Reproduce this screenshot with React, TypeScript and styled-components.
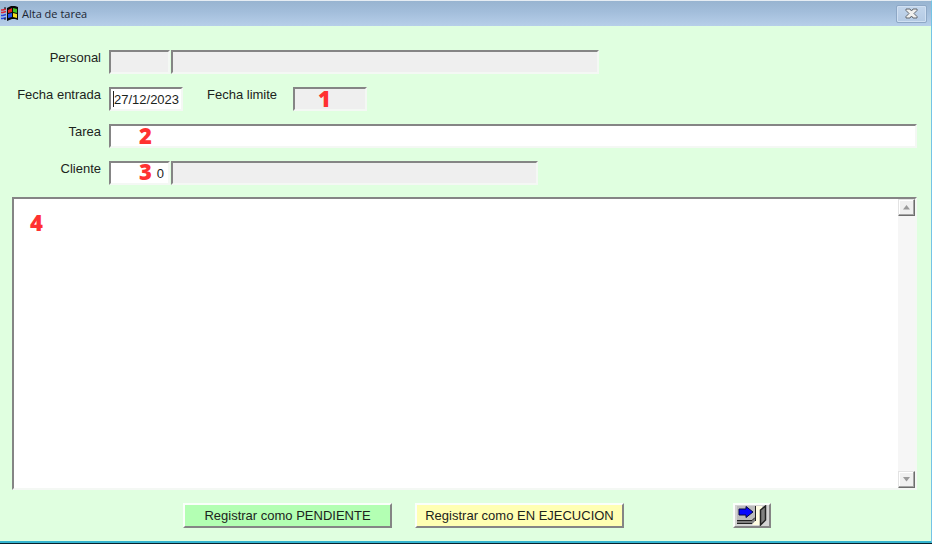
import React from "react";
import styled, { createGlobalStyle } from "styled-components";

const GlobalStyle = createGlobalStyle`
  * { box-sizing: border-box; }
  body { margin: 0; background: #06222c; }
  button, input, textarea { font: inherit; color: inherit; margin: 0; }
`;

const Window = styled.main`
  display: flex;
  flex-direction: column;
  height: calc(100vh - 1px);
  background: #e0ffe0;
  border-top: 1px solid #e6edf3;
  border-right: 1px solid #74c3e6;
  border-bottom: 2px solid #35b4cf;
  font-family: "Liberation Sans", Arial, sans-serif;
  font-size: 13px;
  line-height: 16px;
  color: #1c241c;
`;

const TitleBar = styled.header`
  display: flex;
  align-items: center;
  gap: 4px;
  height: 25px;
  flex: none;
  padding: 0 4px 0 1px;
  background: linear-gradient(#98b4d0, #a3bedb 45%, #b7cfe9);
`;

const Title = styled.h1`
  flex: 1;
  margin: 0;
  font: 400 11px/16px "Open Sans", "Noto Sans", sans-serif;
  color: #1c2733;
`;

const CloseButton = styled.button`
  display: flex;
  align-items: center;
  justify-content: center;
  width: 31px;
  height: 18px;
  padding: 0;
  border: 1px solid #8ea8c6;
  border-radius: 2px;
  background: linear-gradient(#c3d6ec, #b4cae4);
  box-shadow: inset 0 0 0 1px #d0e0f2;
`;

const Form = styled.form`
  display: flex;
  flex-direction: column;
  flex: 1;
  min-height: 0;
  padding: 24px 14px 13px 12px;
`;

const Fields = styled.div`
  display: flex;
  flex-direction: column;
  gap: 13px;
  margin-bottom: 12px;
`;

const Row = styled.div`
  display: flex;
  align-items: flex-start;
  gap: 1px;
`;

const Label = styled.label`
  width: 89px;
  margin-right: 7px;
  text-align: right;
`;

const InlineLabel = styled.label`
  width: 85px;
  margin-left: 23px;
`;

const FieldBox = styled.div<{ $width?: string }>`
  position: relative;
  width: ${(p) => p.$width ?? "auto"};
  flex: ${(p) => (p.$width ? "none" : "1")};
  height: 24px;
`;

const Input = styled.input<{ $numeric?: boolean }>`
  display: block;
  width: 100%;
  height: 100%;
  padding: ${(p) => (p.$numeric ? "0 4px 0 0" : "0 0 0 3px")};
  border: 2px solid;
  border-color: #858585 #f4f8f4 #f4f8f4 #858585;
  border-radius: 0;
  outline: none;
  background: #fff;
  text-align: ${(p) => (p.$numeric ? "right" : "left")};
  &:read-only { background: #efefef; }
`;

const Caret = styled.span`
  position: absolute;
  top: 4px;
  left: 4px;
  width: 1px;
  height: 16px;
  background: #222;
`;

const Marker = styled.span<{ $left: number; $top: number }>`
  position: absolute;
  left: ${(p) => p.$left}px;
  top: ${(p) => p.$top}px;
  font: 800 22px/24px "Open Sans", "Noto Sans", sans-serif;
  color: #ff3131;
  pointer-events: none;
`;

const Notes = styled.div`
  position: relative;
  display: flex;
  flex: 1;
  min-height: 0;
  border: 2px solid;
  border-color: #858585 #f4f8f4 #f4f8f4 #858585;
  background: #fff;
`;

const NotesText = styled.textarea`
  flex: 1;
  border: 0;
  outline: none;
  resize: none;
  padding: 4px;
  background: #fff;
`;

const ScrollTrack = styled.div`
  display: flex;
  flex-direction: column;
  justify-content: space-between;
  width: 17px;
  background: #f6f6f6;
`;

const ScrollButton = styled.button`
  display: flex;
  align-items: center;
  justify-content: center;
  width: 17px;
  height: 17px;
  padding: 0;
  border: 1px solid;
  border-color: #e3e3e3 #6d6d6d #6d6d6d #e3e3e3;
  box-shadow: inset -1px -1px #a5a5a5, inset 1px 1px #fff;
  background: #f0f0f0;
`;

const Actions = styled.footer`
  display: grid;
  grid-template-columns: 209px 209px 38px;
  column-gap: 23px;
  margin: 13px 0 0 171px;
`;

const ActionButton = styled.button<{ $color: string }>`
  height: 25px;
  padding: 0;
  border: 2px solid;
  border-color: #fafffa #858585 #858585 #fafffa;
  background: ${(p) => p.$color};
`;

const ExitButton = styled(ActionButton)`
  display: flex;
  align-items: center;
  justify-content: center;
  width: 38px;
  margin-left: 86px;
`;

const WindowsIcon = () => (
  <svg width="17" height="15" viewBox="0 0 17 15" aria-hidden="true">
    <path d="M6 2 10 0h4l3 1v13l-3-1h-3l-5 2z" fill="#080808" />
    <path d="m7 4 4-2v4L7 7z" fill="#e22a20" />
    <path d="m12 2 4 1v4l-4-1z" fill="#42c321" />
    <path d="m7 8 4-1v4l-4 1z" fill="#2452e8" />
    <path d="m12 7 4 1v4l-4-1z" fill="#f2dc22" />
    <path d="M0 4h2l3-1M0 6.500h2l3-1" fill="none" stroke="#d92635" strokeWidth="1.500" />
    <path d="M0 9.500h2l3-1M0 12.500h2l3-1" fill="none" stroke="#2546d9" strokeWidth="1.500" />
    <path d="M3 2h2M3 13h2" stroke="#080808" />
  </svg>
);

const CloseIcon = () => (
  <svg width="13" height="11" viewBox="0 0 13 11" aria-hidden="true">
    <path
      d="M1 1h4l1.500 2L8 1h4v1.500L9 5.500l3 3V10H8L6.500 8 5 10H1V8.500l3-3-3-3z"
      fill="#f1f1ef"
      stroke="#60666e"
      strokeLinejoin="round"
    />
  </svg>
);

const Arrow = ({ down = false }: { down?: boolean }) => (
  <svg width="9" height="5" viewBox="0 0 9 5" aria-hidden="true">
    <path d={down ? "M1 0h7L4.500 4.500z" : "M1 4.500h7L4.500 0z"} fill="#9a9a9a" />
  </svg>
);

const ExitIcon = () => (
  <svg width="32" height="21" viewBox="0 0 32 21" aria-hidden="true">
    <path d="M1 1h18v15l-3 3H1z" fill="#bdbdbd" />
    <path d="M19 1h7v19H16l3-4z" fill="#fffde2" />
    <path d="M1 15h15l3-2v3l-3 3H1z" fill="#808080" />
    <path d="M1 15.500h15l3-3M1 18.500h15M19.500 1v15" fill="none" stroke="#222" />
    <path d="M3 4h7V1.500l7 5.500-7 5.500V10H3z" fill="#0808ff" stroke="#080840" />
    <path d="m24.500 5 5-4v14l-5 5z" fill="#808080" stroke="#222" strokeWidth="1.500" />
  </svg>
);

export default function App() {
  return (
    <>
      <GlobalStyle />
      <Window>
        <TitleBar>
          <WindowsIcon />
          <Title>Alta de tarea</Title>
          <CloseButton type="button" aria-label="Cerrar"><CloseIcon /></CloseButton>
        </TitleBar>
        <Form onSubmit={(e) => e.preventDefault()}>
          <Fields>
            <Row>
              <Label htmlFor="personal">Personal</Label>
              <FieldBox $width="61px"><Input id="personal" readOnly /></FieldBox>
              <FieldBox $width="428px"><Input aria-label="Nombre del personal" readOnly /></FieldBox>
            </Row>
            <Row>
              <Label htmlFor="entrada">Fecha entrada</Label>
              <FieldBox $width="74px">
                <Input id="entrada" defaultValue="27/12/2023" />
                <Caret />
              </FieldBox>
              <InlineLabel htmlFor="limite">Fecha limite</InlineLabel>
              <FieldBox $width="74px">
                <Input id="limite" readOnly />
                <Marker $left={25} $top={-1}>1</Marker>
              </FieldBox>
            </Row>
            <Row>
              <Label htmlFor="tarea">Tarea</Label>
              <FieldBox>
                <Input id="tarea" />
                <Marker $left={30} $top={-1}>2</Marker>
              </FieldBox>
            </Row>
            <Row>
              <Label htmlFor="cliente">Cliente</Label>
              <FieldBox $width="61px">
                <Input id="cliente" defaultValue="0" $numeric />
                <Marker $left={30} $top={-2}>3</Marker>
              </FieldBox>
              <FieldBox $width="367px"><Input aria-label="Nombre del cliente" readOnly /></FieldBox>
            </Row>
          </Fields>
          <Notes>
            <NotesText aria-label="Descripción de la tarea" />
            <Marker $left={16} $top={11}>4</Marker>
            <ScrollTrack>
              <ScrollButton type="button" aria-label="Subir"><Arrow /></ScrollButton>
              <ScrollButton type="button" aria-label="Bajar"><Arrow down /></ScrollButton>
            </ScrollTrack>
          </Notes>
          <Actions>
            <ActionButton type="button" $color="#b3ffb3">Registrar como PENDIENTE</ActionButton>
            <ActionButton type="button" $color="#ffffb3">Registrar como EN EJECUCION</ActionButton>
            <ExitButton type="button" $color="#d4d4d4" aria-label="Salir"><ExitIcon /></ExitButton>
          </Actions>
        </Form>
      </Window>
    </>
  );
}
